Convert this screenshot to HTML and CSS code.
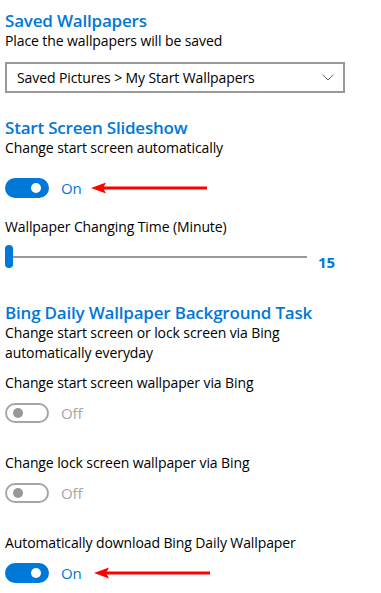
FILE: index.html
```html
<!DOCTYPE html>
<html lang="en">
<head>
    <meta charset="UTF-8">
    <meta name="viewport" content="width=device-width, initial-scale=1.0">
    <title>Wallpaper Settings</title>
    <link rel="stylesheet" href="styles.css">
</head>
<body>
    <div class="settings">
        <!-- Saved wallpapers -->
        <h2 class="section-title first">Saved Wallpapers</h2>
        <p class="desc">Place the wallpapers will be saved</p>
        <div class="dropdown">
            <span>Saved Pictures &gt; My Start Wallpapers</span>
            <svg class="chevron" width="12" height="7" viewBox="0 0 12 7">
                <path d="M0.5 0.5 L6 6 L11.5 0.5" fill="none" stroke="#6e6e6e" stroke-width="1"/>
            </svg>
        </div>

        <!-- Slideshow -->
        <h2 class="section-title">Start Screen Slideshow</h2>
        <p class="desc">Change start screen automatically</p>
        <div class="toggle-row spaced">
            <span class="toggle on"></span>
            <span class="toggle-text on">On</span>
            <svg class="arrow" width="116" height="12" viewBox="0 0 116 12">
                <path d="M0 6 L15 0.5 L12 6 L15 11.5 Z" fill="#f00"/>
                <rect x="10" y="4.5" width="106" height="3" fill="#f00"/>
            </svg>
        </div>

        <p class="label slider-label">Wallpaper Changing Time (Minute)</p>
        <div class="slider">
            <span class="thumb"></span>
            <span class="track"></span>
            <span class="slider-value">15</span>
        </div>

        <!-- Bing -->
        <h2 class="section-title bing">Bing Daily Wallpaper Background Task</h2>
        <p class="desc">Change start screen or lock screen via Bing automatically everyday</p>

        <div class="option first-option">
            <p class="label">Change start screen wallpaper via Bing</p>
            <div class="toggle-row">
                <span class="toggle"></span>
                <span class="toggle-text">Off</span>
            </div>
        </div>

        <div class="option">
            <p class="label">Change lock screen wallpaper via Bing</p>
            <div class="toggle-row">
                <span class="toggle"></span>
                <span class="toggle-text">Off</span>
            </div>
        </div>

        <div class="option">
            <p class="label">Automatically download Bing Daily Wallpaper</p>
            <div class="toggle-row">
                <span class="toggle on"></span>
                <span class="toggle-text on">On</span>
                <svg class="arrow arrow-low" width="116" height="12" viewBox="0 0 116 12">
                    <path d="M0 6 L15 0.5 L12 6 L15 11.5 Z" fill="#f00"/>
                    <rect x="10" y="4.5" width="106" height="3" fill="#f00"/>
                </svg>
            </div>
        </div>
    </div>
</body>
</html>
```

FILE: styles.css
```css
body {
    margin: 0;
    background: #fff;
    font-family: "Open Sans", "Noto Sans", sans-serif;
    font-size: 14px;
    letter-spacing: -0.1px;
    color: #000;
}
.settings {
    padding: 0 5px;
    width: 340px;
}
p {
    margin: 0;
    line-height: 20px;
}
.section-title {
    margin: 24px 0 0;
    font-size: 17px;
    font-weight: 600;
    letter-spacing: -0.2px;
    line-height: 21px;
    color: #0078d7;
}
.section-title.first {
    margin-top: 10px;
}
.section-title.bing {
    margin-top: 34px;
}
.desc {
    width: 330px;
}
.dropdown {
    margin-top: 11px;
    height: 27px;
    border: 2px solid #999;
    display: flex;
    align-items: center;
    justify-content: space-between;
    padding: 0 9px 0 10px;
}
.chevron {
    display: block;
}
.toggle-row {
    display: flex;
    align-items: center;
    height: 20px;
    margin-top: 10px;
}
.toggle-row.spaced {
    margin-top: 20px;
}
.toggle {
    width: 40px;
    height: 16px;
    border: 2px solid #a6a6a6;
    border-radius: 10px;
    position: relative;
    flex: none;
}
.toggle::after {
    content: "";
    position: absolute;
    left: 6px;
    top: 3px;
    width: 10px;
    height: 10px;
    border-radius: 50%;
    background: #999;
}
.toggle.on {
    background: #0078d7;
    border-color: #0078d7;
}
.toggle.on::after {
    left: auto;
    right: 6px;
    background: #fff;
}
.toggle-text {
    margin-left: 12px;
    font-size: 15px;
    color: #a6a6a6;
}
.toggle-text.on {
    color: #0078d7;
}
.arrow {
    margin-left: 9px;
    display: block;
}
.arrow-low {
    margin-left: 12px;
}
.label {
    margin: 0;
}
.slider-label {
    margin-top: 19px;
}
.slider {
    margin-top: 8px;
    height: 23px;
    display: flex;
    align-items: center;
}
.thumb {
    width: 8px;
    height: 23px;
    border-radius: 4px;
    background: #0078d7;
    flex: none;
}
.track {
    width: 294px;
    height: 2px;
    background: #999;
}
.slider-value {
    margin: 10px 0 0 11px;
    font-size: 15px;
    font-weight: 700;
    color: #0078d7;
}
.option {
    margin-top: 30px;
}
.option.first-option {
    margin-top: 10px;
}
```
